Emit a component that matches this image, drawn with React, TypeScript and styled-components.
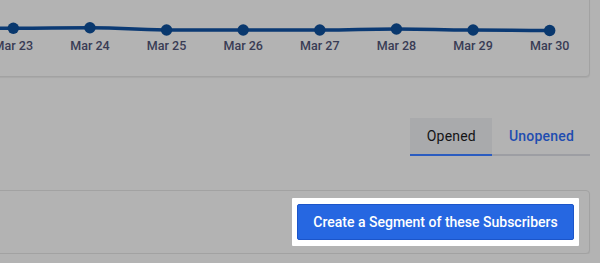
import React from "react";
import styled, { createGlobalStyle } from "styled-components";

const Global = createGlobalStyle`
  html, body { margin: 0; padding: 0; background: #b3b3b3; }
  body { font-family: Roboto, "Liberation Sans", Arial, sans-serif; overflow: hidden; }
`;

const Page = styled.div`
  width: 616px;
  margin-left: -26px;
  margin-top: -40px;
  display: flex;
  flex-direction: column;
`;

const Card = styled.div<{ $h: number }>`
  box-sizing: border-box;
  width: 100%;
  height: ${(p) => p.$h}px;
  border: 1px solid #a2a2a2;
  border-radius: 4px;
  box-shadow: 0 1px 1px rgba(0, 0, 0, 0.06);
  background: #b3b3b3;
`;

const ChartCard = styled(Card)`
  display: flex;
  flex-direction: column;
  padding-top: 50px;
`;

const Plot = styled.div`
  width: 613px;
  height: 26px;
`;

const Labels = styled.div`
  width: 613px;
  display: grid;
  grid-template-columns: repeat(8, 1fr);
  margin-top: 2px;
`;

const Label = styled.span`
  text-align: center;
  font-size: 12.5px;
  font-weight: 500;
  color: #393c55;
  line-height: 14px;
`;

const TabRow = styled.div`
  display: flex;
  justify-content: flex-end;
  margin-top: 41px;
`;

const Tab = styled.button<{ $active?: boolean }>`
  box-sizing: border-box;
  height: 38px;
  padding: 0 16px 0 17px;
  border: 0;
  border-bottom: 2px solid ${(p) => (p.$active ? "#2b5cc0" : "#9d9ea3")};
  background: ${(p) => (p.$active ? "#a9aaac" : "transparent")};
  color: ${(p) => (p.$active ? "#141416" : "#1f4db0")};
  font-family: Roboto, "Liberation Sans", Arial, sans-serif;
  font-size: 14px;
  font-weight: ${(p) => (p.$active ? 400 : 500)};
  letter-spacing: 0.2px;
  cursor: pointer;
`;

const ActionCard = styled(Card)`
  margin-top: 34px;
  display: flex;
  align-items: center;
  justify-content: flex-end;
  padding-right: 10px;
`;

const Spotlight = styled.div`
  background: #ffffff;
  padding: 6px 5px;
  border-radius: 1px;
  display: flex;
`;

const PrimaryButton = styled.button`
  box-sizing: border-box;
  height: 36px;
  width: 277px;
  background: #2667e1;
  border: 1px solid #1c55c9;
  border-radius: 2px;
  color: #ffffff;
  font-family: Roboto, "Liberation Sans", Arial, sans-serif;
  font-size: 14px;
  font-weight: 500;
  cursor: pointer;
`;

const labels = ["Mar 23", "Mar 24", "Mar 25", "Mar 26", "Mar 27", "Mar 28", "Mar 29", "Mar 30"];
const ys = [27.3, 26.7, 29, 29, 29, 28, 29, 29.5];

function Chart() {
  const step = 613 / 8;
  const pts = ys.map((y, i) => [step / 2 + i * step, y - 10] as [number, number]);
  let d = `M -10 ${pts[0][1]} L ${pts[0][0]} ${pts[0][1]}`;
  for (let i = 1; i < pts.length; i++) {
    const [x0, y0] = pts[i - 1];
    const [x1, y1] = pts[i];
    const cx = (x0 + x1) / 2;
    d += ` C ${cx} ${y0} ${cx} ${y1} ${x1} ${y1}`;
  }
  return (
    <Plot>
      <svg width="613" height="26" viewBox="0 0 613 26" style={{ display: "block", overflow: "visible" }}>
        <path d={d} fill="none" stroke="#0b3a74" strokeWidth="3.5" strokeLinejoin="round" />
        {pts.map(([x, y], i) => (
          <circle key={i} cx={x} cy={y} r="5.7" fill="#09386e" />
        ))}
      </svg>
    </Plot>
  );
}

export default function App() {
  return (
    <>
      <Global />
      <Page>
        <ChartCard $h={117}>
          <Chart />
          <Labels>
            {labels.map((l) => (
              <Label key={l}>{l}</Label>
            ))}
          </Labels>
        </ChartCard>
        <TabRow>
          <Tab $active>Opened</Tab>
          <Tab>Unopened</Tab>
        </TabRow>
        <ActionCard $h={64}>
          <Spotlight>
            <PrimaryButton>Create a Segment of these Subscribers</PrimaryButton>
          </Spotlight>
        </ActionCard>
      </Page>
    </>
  );
}
